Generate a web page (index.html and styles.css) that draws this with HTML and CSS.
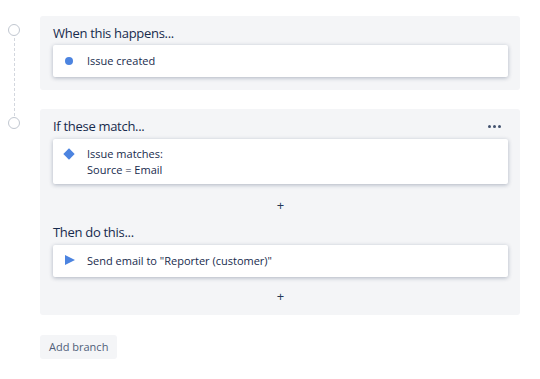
FILE: index.html
```html
<!DOCTYPE html>
<html>
<head>
<meta charset="utf-8">
<link rel="stylesheet" href="styles.css">
</head>
<body>
<div class="flow">
  <div class="row row-first">
    <div class="gutter"><span class="node"></span></div>
    <section class="panel">
      <h3 class="title">When this happens...</h3>
      <div class="card">
        <span class="ico"><span class="dot"></span></span>
        <span class="label">Issue created</span>
      </div>
    </section>
  </div>
  <div class="row">
    <div class="gutter"><span class="node"></span></div>
    <section class="panel panel-branch">
      <div class="title-row">
        <h3 class="title">If these match...</h3>
        <span class="more"><i></i><i></i><i></i></span>
      </div>
      <div class="card card-tall">
        <span class="ico"><span class="diamond"></span></span>
        <span class="label">Issue matches:<br>Source = Email</span>
      </div>
      <div class="add">+</div>
      <h3 class="title title-then">Then do this...</h3>
      <div class="card">
        <span class="ico"><span class="tri"></span></span>
        <span class="label">Send email to "Reporter (customer)"</span>
      </div>
      <div class="add add-last">+</div>
    </section>
  </div>
  <div class="row">
    <div class="gutter"></div>
    <div><button class="btn">Add branch</button></div>
  </div>
</div>
</body>
</html>
```
FILE: styles.css
```css
* { box-sizing: border-box; }
html, body { margin: 0; padding: 0; background: #fff; }
body {
  font-family: "Open Sans", "Noto Sans", sans-serif;
  color: #172b4d;
  width: 540px;
  height: 379px;
  overflow: hidden;
}
.flow {
  padding: 16px 20px 0 0;
  display: flex;
  flex-direction: column;
  gap: 19px;
}
.row {
  display: grid;
  grid-template-columns: 40px 1fr;
  position: relative;
}
.row-first::before {
  content: "";
  position: absolute;
  left: 14px;
  top: 22px;
  height: 78px;
  border-left: 1px dashed #d3d7de;
}
.gutter { position: relative; }
.node {
  display: block;
  width: 12px;
  height: 12px;
  margin: 8px 0 0 8px;
  border: 1px solid #c1c7d0;
  border-radius: 50%;
  background: #fff;
  position: relative;
  z-index: 1;
}
.panel {
  background: #f4f5f7;
  border-radius: 3px;
  padding: 8px 12px 13px 13px;
}
.panel-branch { padding-bottom: 11px; }
.title {
  margin: 0;
  font-size: 13px;
  font-weight: 400;
  line-height: 18px;
  letter-spacing: -0.3px;
  color: #172b4d;
}
.title-then { margin-bottom: 1px; }
.title-row {
  display: flex;
  justify-content: space-between;
  align-items: center;
}
.more {
  display: flex;
  gap: 2px;
  margin-right: 7px;
}
.more i {
  display: block;
  width: 3px;
  height: 3px;
  border-radius: 50%;
  background: #42526e;
}
.card {
  margin-top: 3px;
  background: #fff;
  border-radius: 2px;
  box-shadow: 0 1px 4px rgba(9, 30, 66, 0.3);
  display: flex;
  align-items: center;
  height: 32px;
  font-size: 11px;
  line-height: 16px;
}
.panel-branch .card { margin-top: 4px; }
.card-tall {
  height: 45px;
  align-items: flex-start;
  padding-top: 7px;
}
.ico {
  width: 34px;
  flex: none;
  display: flex;
  justify-content: center;
  padding-right: 2px;
}
.card-tall .ico { padding-top: 4px; }
.dot {
  width: 8px;
  height: 8px;
  border-radius: 50%;
  background: #4c84e0;
}
.diamond {
  width: 8px;
  height: 8px;
  background: #4c84e0;
  transform: rotate(45deg);
}
.tri {
  width: 0;
  height: 0;
  border-top: 5px solid transparent;
  border-bottom: 5px solid transparent;
  border-left: 10px solid #4c84e0;
  margin-left: 2px;
  margin-top: -2px;
}
.label { color: #172b4d; }
.add {
  text-align: center;
  font-size: 13px;
  line-height: 16px;
  color: #253858;
  padding: 13px 0 10px;
}
.add-last { padding: 11px 0 0; }
.btn {
  font-family: "Open Sans", "Noto Sans", sans-serif;
  font-size: 11px;
  color: #505f79;
  background: #f4f5f7;
  border: none;
  border-radius: 3px;
  height: 24px;
  padding: 0 9px;
}
```
